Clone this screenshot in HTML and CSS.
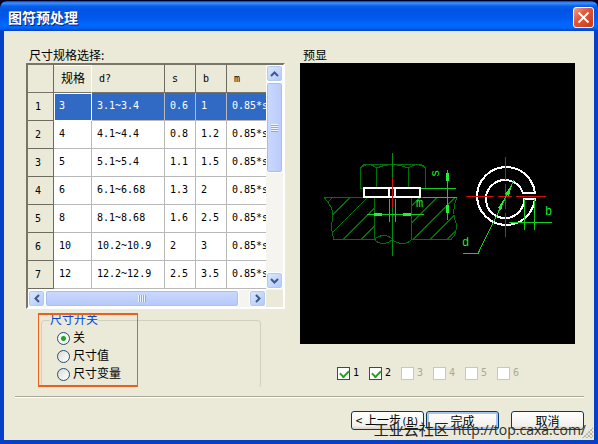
FILE: index.html
```html
<!DOCTYPE html>
<html lang="zh-CN">
<head>
    <meta charset="UTF-8">
    <meta name="viewport" content="width=device-width, initial-scale=1.0">
    <title>图符预处理</title>
    <link rel="stylesheet" href="styles.css">
</head>
<body>

    <div class="window">
        <div class="titlebar">
            <h1>图符预处理</h1>
            <button class="close" type="button" aria-label="关闭">
                <svg width="13" height="13" viewBox="0 0 13 13"><path d="M1.5 1.5l10 10M11.5 1.5l-10 10"/></svg>
            </button>
        </div>

        <div class="content">
            <div class="panels">
                <div class="left">
                    <h2>尺寸规格选择:</h2>
                    <div class="grid-box">
                        <div class="grid-view">
                            <table>
                                <thead>
                                    <tr><th class="num"></th><th class="size current">规格</th><th class="dia">d?</th><th class="small">s</th><th class="small">b</th><th class="last">m</th></tr>
                                </thead>
                                <tbody>
                                    <tr class="selected"><th>1</th><td class="focus">3</td><td>3.1~3.4</td><td>0.6</td><td>1</td><td>0.85*s</td></tr>
                                    <tr><th>2</th><td>4</td><td>4.1~4.4</td><td>0.8</td><td>1.2</td><td>0.85*s</td></tr>
                                    <tr><th>3</th><td>5</td><td>5.1~5.4</td><td>1.1</td><td>1.5</td><td>0.85*s</td></tr>
                                    <tr><th>4</th><td>6</td><td>6.1~6.68</td><td>1.3</td><td>2</td><td>0.85*s</td></tr>
                                    <tr><th>5</th><td>8</td><td>8.1~8.68</td><td>1.6</td><td>2.5</td><td>0.85*s</td></tr>
                                    <tr><th>6</th><td>10</td><td>10.2~10.9</td><td>2</td><td>3</td><td>0.85*s</td></tr>
                                    <tr><th>7</th><td>12</td><td>12.2~12.9</td><td>2.5</td><td>3.5</td><td>0.85*s</td></tr>
                                </tbody>
                            </table>
                        </div>
                        <div class="scroll-v">
                            <button type="button" aria-label="向上"><svg width="9" height="6" viewBox="0 0 9 6"><path d="M1 5l3.500-3.500L8 5"/></svg></button>
                            <div class="thumb"></div>
                            <button type="button" aria-label="向下"><svg width="9" height="6" viewBox="0 0 9 6"><path d="M1 1l3.500 3.500L8 1"/></svg></button>
                        </div>
                        <div class="scroll-h">
                            <button type="button" aria-label="向左"><svg width="6" height="9" viewBox="0 0 6 9"><path d="M5 1L1.500 4.500L5 8"/></svg></button>
                            <div class="thumb"></div>
                            <button type="button" aria-label="向右"><svg width="6" height="9" viewBox="0 0 6 9"><path d="M1 1l3.500 3.500L1 8"/></svg></button>
                        </div>
                    </div>

                    <fieldset>
                        <legend>尺寸开关</legend>
                        <label><input type="radio" name="dim" checked>关</label>
                        <label><input type="radio" name="dim">尺寸值</label>
                        <label><input type="radio" name="dim">尺寸变量</label>
                        <div class="mark"></div>
                    </fieldset>
                </div>

                <div class="right">
                    <h2>预显</h2>
                    <svg class="preview" viewBox="300 63 275 281">
                        <!-- bolt head and plate -->
                        <g class="dark">
                            <path d="M360.5 189V168Q362 164.500 365 164.500H420Q424 165 425.500 168V189M376.500 189V168M408.500 189V168M360.500 168Q368 161 376.500 168Q392 161 408.500 168Q417 161 425.500 168M360.500 188.500H425"/>
                            <path d="M324 197.500H457M324 197.500Q333 206 333 217Q330 229 334 239.500H374.500V197.500M411.500 197.500V239.500H451Q458 233 456 223Q451 211 457 197.500"/>
                            <path d="M374.500 239Q379 235.500 384 235.500Q390 236 392.500 239.500Q388 243.500 382 243.500Q377 243 374.500 239M392.500 239.500Q396 243.500 403 243.500Q409 243 411.500 239.500"/>
                            <path d="M328 202L332.500 197.500M333 214L344 203M350 197.500L333 214.500M332 233L367.500 197.500M343 239.500L374.500 208M361 239.500L374.500 226M411.500 206L420 197.500M411.500 223L437 197.500M413 239.500L455 197.500M430 239.500L454 215.500M447 239.500L456 230.500"/>
                        </g>
                        <path class="mid" d="M392.500 153V256"/>
                        <!-- dimension lines -->
                        <g class="green">
                            <path d="M420 188.500H456M423 197.500H457M447.500 170V220M389.500 199V222M395.500 199V222M367 214.500H424"/>
                            <path class="fill" d="M446 173h3v8h-3zM446 205h3v8h-3zM374 213h8v3h-8zM403 213h8v3h-8z"/>
                        </g>
                        <path class="white" d="M364 188H420V197H364ZM389 188V197M395 188V197"/>
                        <path class="red" d="M392.500 177V208"/>
                        <!-- washer, top view -->
                        <path class="white" d="M535 193A29 29 0 1 0 535 199H524A19 19 0 1 1 523 193Z"/>
                        <path class="red" d="M505.500 157V180M505.500 184V209M505.500 213V237M466 196.500H494M498 196.500H512M516 196.500H546"/>
                        <g class="green">
                            <path d="M514 180L478 253.500H463M524.500 199V230M534.500 199V230M509 222.500H552"/>
                            <path class="fill" d="M512 185L505 194L509 196ZM504 199L498 208L501 211Z"/>
                        </g>
                        <g class="letters">
                            <text x="416" y="207">m</text>
                            <text x="462" y="246">d</text>
                            <text x="545" y="215">b</text>
                            <text transform="translate(439 177) rotate(-90)">s</text>
                        </g>
                    </svg>
                    <div class="checks">
                        <label><input type="checkbox" checked>1</label>
                        <label><input type="checkbox" checked>2</label>
                        <label><input type="checkbox" disabled>3</label>
                        <label><input type="checkbox" disabled>4</label>
                        <label><input type="checkbox" disabled>5</label>
                        <label><input type="checkbox" disabled>6</label>
                    </div>
                </div>
            </div>

            <div class="buttons">
                <button type="button">&lt; 上一步<span class="key">(<u>B</u>)</span></button>
                <button type="button" class="default">完成</button>
                <button type="button" class="cancel">取消</button>
            </div>
        </div>

        <div class="grip"></div>
        <div class="watermark">工业云社区 <a href="http://top.caxa.com/">http://top.caxa.com/</a></div>
    </div>

</body>
</html>
```

FILE: styles.css
```css
* {
    box-sizing: border-box;
}

body {
    margin: 0;
    background-color: #000028;
    font-family: "DejaVu Sans Mono", "Noto Sans CJK SC", monospace;
    font-size: 12px;
    line-height: 18px;
    color: #000;
}

h1, h2 {
    margin: 0;
    font-family: "Noto Sans CJK SC", sans-serif;
}

button {
    padding: 0;
    font-family: "Noto Sans CJK SC", sans-serif;
    font-size: 12px;
}

.window {
    position: relative;
    display: flex;
    flex-direction: column;
    min-height: 100vh;
    border-top: 1px solid #000028;
    overflow: hidden;
}

.titlebar {
    display: flex;
    align-items: center;
    justify-content: space-between;
    height: 30px;
    padding: 2px 4px 0 8px;
    border-radius: 7px 7px 0 0;
    background: linear-gradient(#0840b8 0, #3c93ff 2px, #0a60ec 5px, #0054e3 9px, #0058ee 17px, #0068ff 23px, #0064f8 27px, #0040c0 30px);
}

.titlebar h1 {
    font-size: 14px;
    font-weight: bold;
    line-height: 18px;
    color: #fff;
    text-shadow: 1px 1px #0a2070;
}

.close {
    display: flex;
    align-items: center;
    justify-content: center;
    width: 21px;
    height: 21px;
    border: 1px solid #fff;
    border-radius: 3px;
    background: linear-gradient(135deg, #f0a088, #e0583a 40%, #c83a18);
}

.close path {
    fill: none;
    stroke: #fff;
    stroke-width: 2;
}

.content {
    flex: 1;
    display: flex;
    flex-direction: column;
    padding: 15px 10px 10px 11px;
    background-color: #ebe9d8;
    border: solid #0640c8;
    border-width: 0 4px 4px;
}

.panels {
    display: flex;
    gap: 15px;
    padding: 0 9px 0 11px;
}

.left {
    width: 259px;
}

.right {
    flex: 1;
}

h2 {
    height: 17px;
    padding-left: 3px;
    font-size: 12px;
    font-weight: normal;
    line-height: 18px;
}

/* size table */
.grid-box {
    display: grid;
    grid-template-columns: 1fr 17px;
    grid-template-rows: 225px 17px;
    border: 2px solid #777568;
    border-right-color: #fff;
    border-bottom-color: #fff;
    background-color: #ebe9d8;
}

.grid-view {
    overflow: hidden;
    background-color: #fff;
}

table {
    width: 250px;
    table-layout: fixed;
    border-collapse: separate;
    border-spacing: 0;
    font-size: 10px;
    line-height: 18px;
}

th, td {
    height: 28px;
    padding: 0 0 2px 5px;
    text-align: left;
    font-weight: normal;
    white-space: nowrap;
    border-right: 1px solid #b8b8b8;
    border-bottom: 1px solid #b8b8b8;
}

th {
    background-color: #ebe9d8;
    border-color: #6e6c60;
}

thead th {
    padding: 0 0 0 7px;
    border-bottom-color: #77756a;
}

.current {
    font-size: 12px;
    border-top: 1px solid #fff;
    border-right-color: #fff;
}

tbody th {
    padding: 0 0 0 7px;
}

.num { width: 26px; }
.size { width: 38px; }
.dia { width: 73px; }
.small { width: 31px; }
.last { width: 51px; }

.selected td {
    background-color: #316ac5;
    color: #fff;
}

.selected .focus {
    outline: 1px solid #fff;
    outline-offset: -1px;
}

.scroll-v, .scroll-h {
    display: flex;
    background-color: #f5f4ee;
}

.scroll-v {
    flex-direction: column;
    justify-content: space-between;
    padding-bottom: 1px;
}

.scroll-h .thumb {
    flex: 1;
    margin-right: 10px;
}

.scroll-v .thumb {
    height: 91px;
    margin-bottom: auto;
}

.scroll-v button, .scroll-h button {
    display: flex;
    align-items: center;
    justify-content: center;
    width: 17px;
    height: 17px;
    flex: none;
    border: 1px solid #fff;
    border-radius: 3px;
    background: linear-gradient(135deg, #dce8ff, #b0c8f8);
    box-shadow: inset 0 0 0 1px #b4c8f0;
}

.scroll-v path, .scroll-h path {
    fill: none;
    stroke: #405888;
    stroke-width: 2;
}

.thumb {
    display: flex;
    align-items: center;
    justify-content: center;
    border: 1px solid #fff;
    border-radius: 3px;
    background: linear-gradient(90deg, #cad9ff, #bacbfa);
    box-shadow: inset 0 0 0 1px #a8bff0;
}

.scroll-h .thumb {
    background: linear-gradient(#cad9ff, #b4c8fa);
}

.thumb::after {
    content: "";
    width: 7px;
    height: 8px;
    background: repeating-linear-gradient(#eef4ff 0 1px, #8ca8e8 1px 2px);
}

.scroll-h .thumb::after {
    width: 8px;
    height: 7px;
    background: repeating-linear-gradient(90deg, #eef4ff 0 1px, #8ca8e8 1px 2px);
}

/* dimension switch */
fieldset {
    position: relative;
    display: flex;
    flex-direction: column;
    width: 220px;
    margin: 2px 0 0 15px;
    padding: 0 0 4px 15px;
    border: 1px solid #d0d0bf;
    border-bottom-color: transparent;
    border-radius: 4px;
}

legend {
    margin-left: -7px;
    padding: 0;
    color: #0046d5;
    height: 18px;
}

fieldset label {
    display: flex;
    align-items: center;
    gap: 3px;
    height: 18px;
}

.mark {
    position: absolute;
    top: -16px;
    left: -4px;
    width: 100px;
    height: 74px;
    border: solid #e8601c;
    border-width: 2px 1px;
    pointer-events: none;
}

input {
    appearance: none;
    flex: none;
    width: 13px;
    height: 13px;
    margin: 0;
    border: 1px solid #1c5180;
    background: #fff;
}

input[type="radio"] {
    border-radius: 50%;
    background: linear-gradient(135deg, #dcdcd4, #fff);
}

input[type="radio"]:checked {
    background: radial-gradient(circle, #28a028 2px, #f4f6f2 3px);
}

input[type="checkbox"]:checked::after {
    content: "";
    display: block;
    width: 7px;
    height: 4px;
    margin: 2px;
    border: solid #21a121;
    border-width: 0 0 2px 2px;
    transform: rotate(-45deg);
}

input:disabled {
    border-color: #cac8bb;
}

/* preview */
.preview {
    display: block;
    width: 100%;
    background-color: #000;
}

.preview path {
    fill: none;
    shape-rendering: crispEdges;
}

.dark {
    stroke: #007008;
}

.mid {
    stroke: #009010;
}

.green {
    stroke: #10d020;
}

.preview .fill {
    fill: #20f030;
    stroke: none;
}

.white {
    stroke: #fff;
    stroke-width: 2;
}

.red {
    stroke: #d01010;
}

.letters {
    fill: #20e828;
    font-family: "Liberation Mono", monospace;
    font-size: 12px;
}

.checks {
    display: flex;
    padding: 20px 0 0 37px;
}

.checks label {
    display: flex;
    align-items: center;
    gap: 3px;
    width: 32px;
    font-size: 10px;
}

.checks label:has(:disabled) {
    color: #aca899;
}

/* bottom buttons */
.buttons {
    display: flex;
    justify-content: flex-end;
    gap: 2px;
    margin-top: auto;
    padding-top: 14px;
    border-top: 1px solid #aca899;
    box-shadow: inset 0 1px #fff;
}

.buttons button {
    width: 73px;
    height: 19px;
    line-height: 16px;
    border: 1px solid #003c74;
    border-radius: 3px;
    background: linear-gradient(#fff, #f2f1eb 80%, #d8d2c4);
    white-space: nowrap;
}

.buttons .default {
    box-shadow: inset 0 0 0 2px #a8c4f0;
}

.buttons .cancel {
    margin-left: 10px;
}

.key {
    font-family: "DejaVu Sans Mono", monospace;
    font-size: 10px;
}

.grip {
    position: absolute;
    right: 5px;
    bottom: 6px;
    width: 11px;
    height: 11px;
    background: repeating-conic-gradient(#b8b4a0 0 25%, transparent 0 50%) 0 0 / 4px 4px;
    clip-path: polygon(100% 0, 100% 100%, 0 100%);
}

.watermark {
    position: absolute;
    right: 12px;
    bottom: 4px;
    font-family: "Open Sans", "Noto Sans CJK SC", sans-serif;
    font-size: 15px;
    line-height: 20px;
    color: #202020;
    white-space: nowrap;
}

.watermark a {
    font-size: 14px;
    color: #303030;
    text-decoration: none;
}
```
